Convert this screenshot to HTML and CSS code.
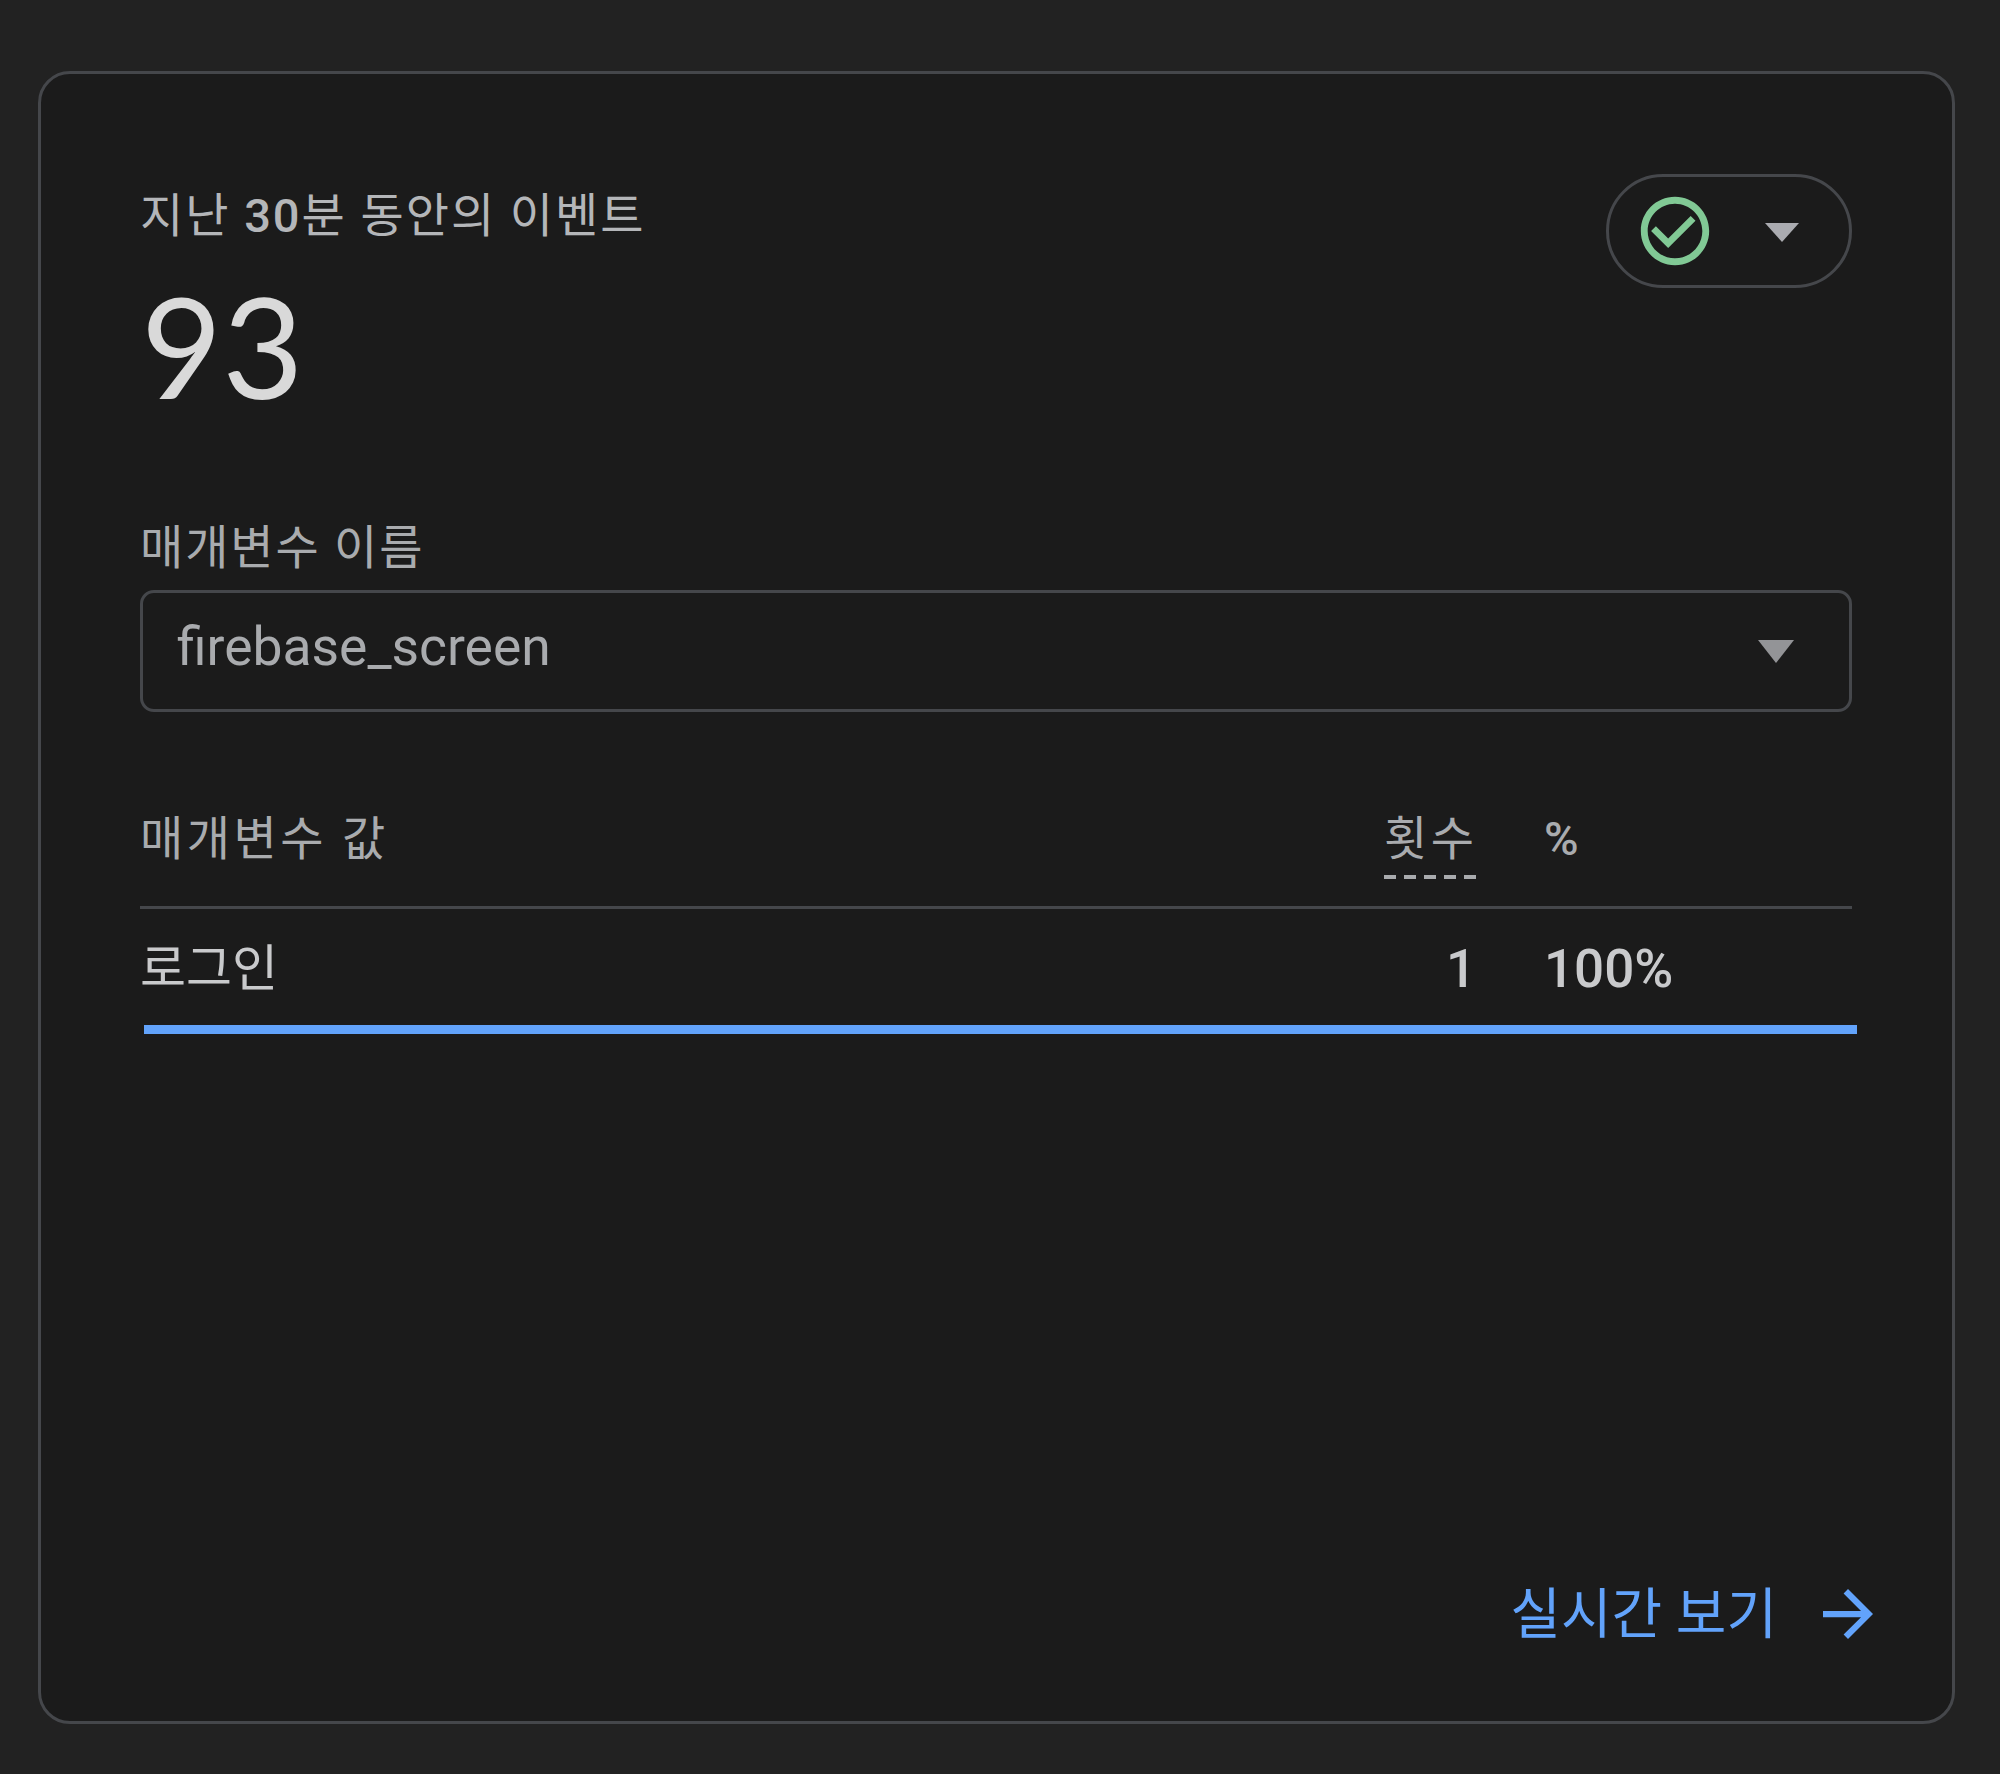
FILE: index.html
```html
<!DOCTYPE html>
<html lang="ko">
<head>
<meta charset="utf-8">
<title>실시간 이벤트</title>
<link rel="stylesheet" href="styles.css">
</head>
<body>
<main class="card">
  <header class="top">
    <div class="summary">
      <div class="title">지난 <span class="num">30</span>분 동안의 이벤트</div>
      <div class="total">93</div>
    </div>
    <button class="status" type="button">
      <svg class="check" viewBox="0 0 24 24"><path d="M16.59 7.58L10 14.17l-3.59-3.58L5 12l5 5 8-8zM12 2C6.48 2 2 6.48 2 12s4.48 10 10 10 10-4.48 10-10S17.52 2 12 2zm0 18c-4.42 0-8-3.58-8-8s3.58-8 8-8 8 3.58 8 8-3.58 8-8 8z"/></svg>
      <svg class="caret" viewBox="0 0 34 19"><path d="M0 0H34L17 19z"/></svg>
    </button>
  </header>
  <div class="field-label">매개변수 이름</div>
  <div class="select">
    <span class="select-text">firebase_screen</span>
    <svg class="select-caret" viewBox="0 0 36 23"><path d="M0 0H36L18 23z"/></svg>
  </div>
  <div class="table-head">
    <span class="col-name">매개변수 값</span>
    <span class="col-count"><span class="dashed">횟수</span></span>
    <span class="col-pct num">%</span>
  </div>
  <div class="table-row">
    <span class="col-name">로그인</span>
    <span class="col-count num">1</span>
    <span class="col-pct num">100%</span>
  </div>
  <div class="bar"></div>
  <footer class="foot">
    <a class="link" href="#">실시간 보기
      <svg class="arrow" viewBox="4 4 16 16"><path d="M12 4l-1.41 1.41L16.17 11H4v2h12.17l-5.58 5.59L12 20l8-8z"/></svg>
    </a>
  </footer>
</main>
</body>
</html>
```
FILE: styles.css
```css
* { box-sizing: border-box; }
html, body { margin: 0; height: 100%; }
body {
  background: #222222;
  padding: 71px 45px 50px 38px;
  font-family: Roboto, "Noto Sans CJK KR", sans-serif;
}
.card {
  height: 1653px;
  background: #1b1b1b;
  border: 3px solid #45474b;
  border-radius: 32px;
  padding: 0 100px 0 99px;
  display: flex;
  flex-direction: column;
}
.num { font-weight: 500; }
.top {
  display: flex;
  justify-content: space-between;
  align-items: flex-start;
  padding-top: 100px;
}
.summary { display: flex; flex-direction: column; }
.title {
  font-size: 47px;
  line-height: 50px;
  letter-spacing: 2px;
  color: #b4b6b9;
  margin-top: 17px;
}
.total {
  font-family: Lato, sans-serif;
  font-size: 140px;
  line-height: 144px;
  color: #d9d9d9;
  margin-top: 32px;
  margin-left: 1px;
}
.status {
  width: 246px;
  height: 114px;
  margin-top: 0;
  border: 3px solid #45474b;
  border-radius: 57px;
  background: none;
  padding: 0 0 0 25px;
  display: flex;
  align-items: center;
}
.check { width: 82px; height: 82px; fill: #81c995; flex: none; }
.caret { width: 34px; height: 19px; fill: #aaabb0; margin: 2px 0 0 49px; flex: none; }
.field-label {
  font-size: 47px;
  line-height: 50px;
  letter-spacing: 1.9px;
  color: #a9abae;
  margin-top: 106px;
}
.select {
  height: 122px;
  margin-top: 17px;
  border: 3px solid #45474b;
  border-radius: 14px;
  display: flex;
  align-items: center;
  justify-content: space-between;
  padding: 0 55px 0 34px;
}
.select-text {
  font-size: 53.4px;
  line-height: 60px;
  color: #a9abae;
  margin-top: -8px;
}
.select-caret { width: 36px; height: 23px; fill: #939497; flex: none; }
.table-head, .table-row {
  display: grid;
  grid-template-columns: 1fr 130px 376px;
}
.table-head {
  align-items: baseline;
  height: 105px;
  margin-top: 92px;
  border-bottom: 3px solid #45474b;
  padding-top: 10px;
  font-size: 47px;
  line-height: 50px;
  color: #a9abae;
  letter-spacing: 3.5px;
}
.col-count { text-align: right; }
.col-pct { padding-left: 68px; }
.dashed {
  display: inline-block;
  width: 92px;
  text-align: left;
  white-space: nowrap;
  padding-bottom: 15px;
  margin-bottom: -15px;
  background: repeating-linear-gradient(to right, #a9abae 0 12px, transparent 12px 20px) left bottom / 100% 4px no-repeat;
}
.table-head .col-pct { font-size: 47px; letter-spacing: 0; }
.table-row {
  align-items: center;
  height: 102px;
  padding-top: 8px;
  font-size: 50px;
  color: #c9cacc;
}
.table-row .num { font-size: 53px; margin-top: 9px; }
.bar {
  height: 9px;
  background: #62a3fb;
  margin: 14px -5px 0 4px;
}
.foot {
  margin-top: auto;
  margin-right: -21px;
  padding-bottom: 77px;
  display: flex;
  justify-content: flex-end;
}
.link {
  display: flex;
  align-items: center;
  font-size: 55px;
  line-height: 60px;
  color: #62a3fb;
  text-decoration: none;
}
.arrow { width: 50px; height: 50px; fill: #62a3fb; margin: 0 0 0 46px; flex: none; }
```
